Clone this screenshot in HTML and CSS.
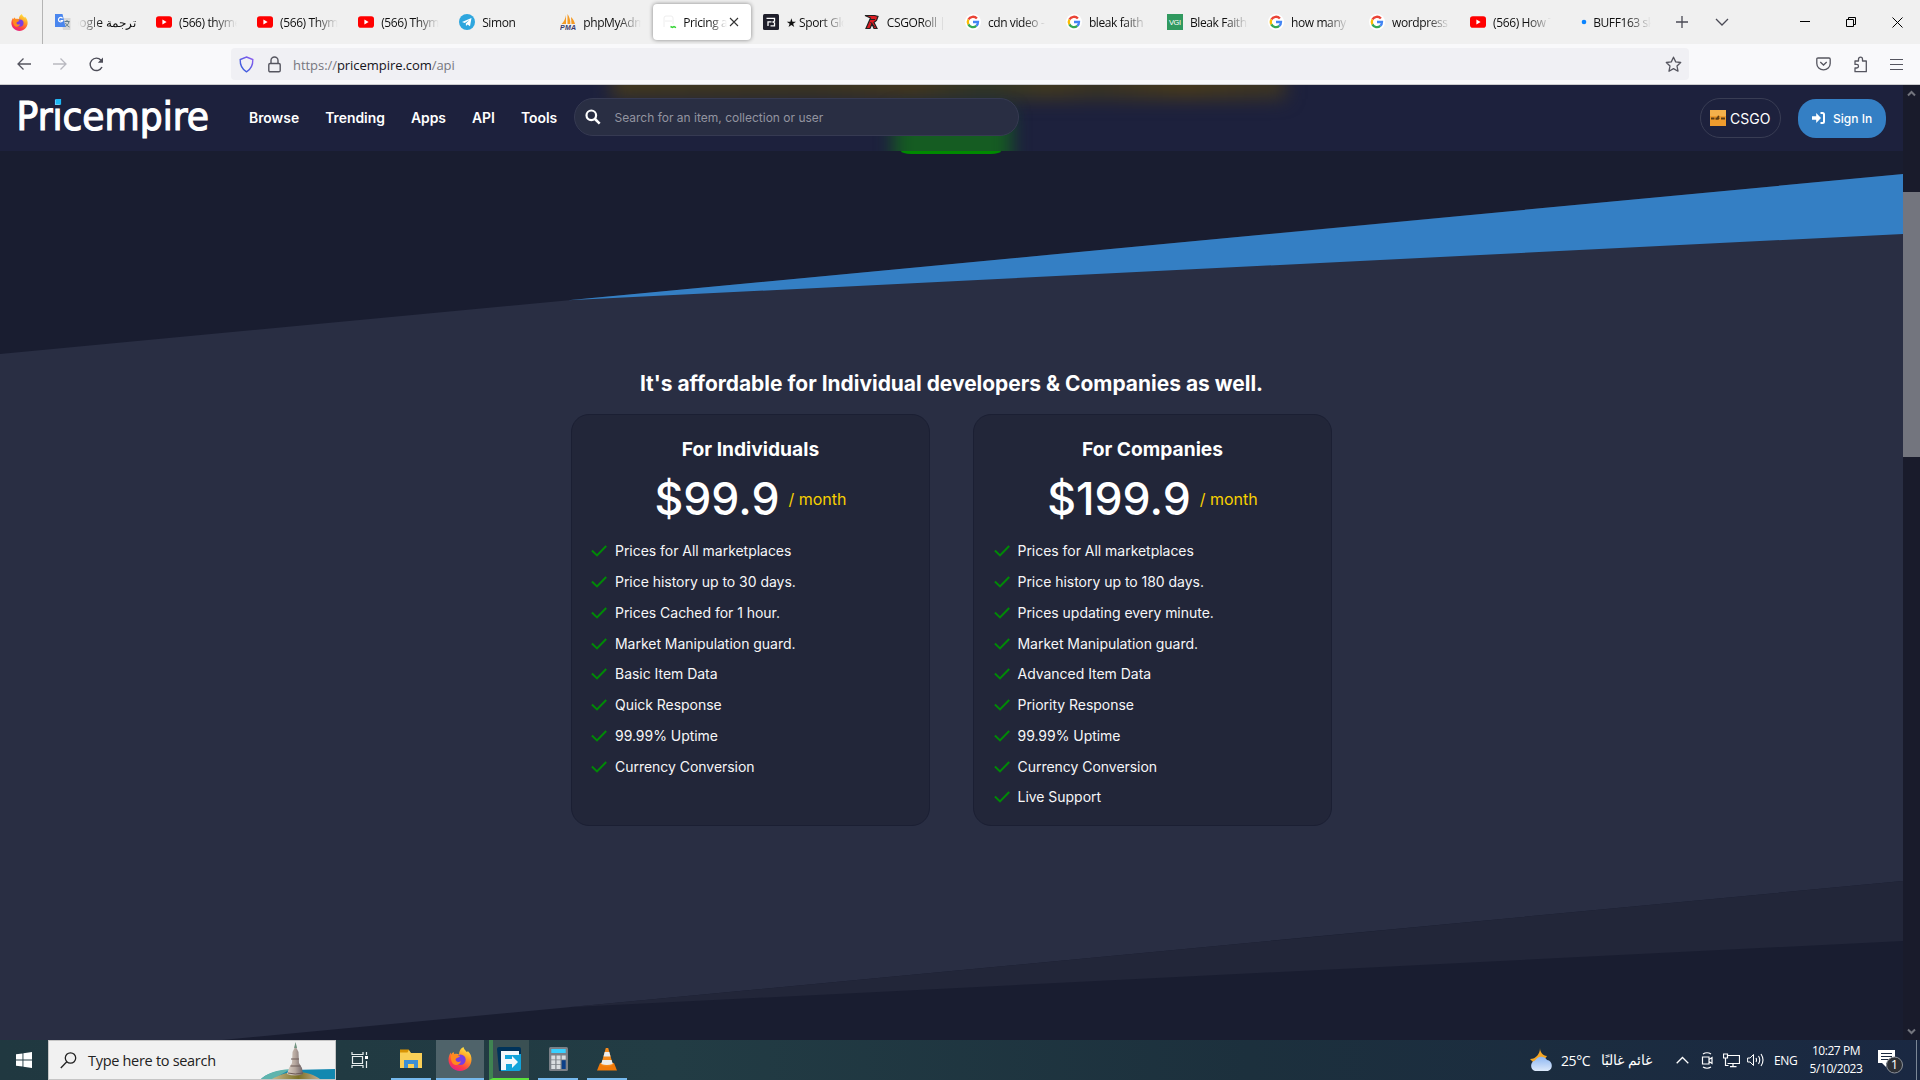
FILE: index.html
```html
<!DOCTYPE html>
<html lang="en">
<head>
<meta charset="utf-8">
<title>Pricing and API</title>
<link rel="stylesheet" href="styles.css">
</head>
<body>
<svg class="defs" width="0" height="0">
  <defs>
    <linearGradient id="fx" x1="0.8" y1="0" x2="0.3" y2="1"><stop offset="0" stop-color="#fff04a"/><stop offset=".4" stop-color="#ff9a24"/><stop offset=".75" stop-color="#ff4044"/><stop offset="1" stop-color="#e0208c"/></linearGradient>
    <linearGradient id="shield" x1="0" y1="1" x2="1" y2="0"><stop offset="0" stop-color="#2b5fd9"/><stop offset="1" stop-color="#8f5bf0"/></linearGradient>
    <linearGradient id="cloud" x1="0" y1="0" x2="0" y2="1"><stop offset="0" stop-color="#8db6f2"/><stop offset="1" stop-color="#dce9fb"/></linearGradient>
    <linearGradient id="stone" x1="0" y1="0" x2="1" y2="0"><stop offset="0" stop-color="#ddd2c8"/><stop offset=".5" stop-color="#b7a89f"/><stop offset="1" stop-color="#6f6468"/></linearGradient>
    <linearGradient id="hill" x1="0" y1="0" x2="1" y2="0"><stop offset="0" stop-color="#c9b98e"/><stop offset=".55" stop-color="#7c7127"/><stop offset="1" stop-color="#c6ad91"/></linearGradient>
    <symbol id="i-firefox" viewBox="0 0 24 24"><path d="M15.5 0c.2 2 1.7 3.2 3 4.700 1 .6 1.200-.2 1.300-.7 2.800 2.500 3.700 5.500 3.700 8.500C23.500 19 18.400 24 12 24S.5 19 .5 12.800c0-3 1-5.500 2.200-7.300l.4 2C4 6 4.700 5.500 5.500 5l.9 2.200c1.600-.6 3-.4 4.600.2 0-3 1.500-6 4.500-7.400z" fill="url(#fx)"/><circle cx="12.500" cy="12.800" r="5.200" fill="#7a3ee0"/><path d="M3 8c3-2 6 0 9 1-1 2-4 1.500-4.500 3.500.3 2.500 3 3.200 5.500 1.700-1 4-6 5-8.500 2C3 14 2.500 11 3 8z" fill="#ff8a1e"/></symbol>
    <symbol id="i-youtube" viewBox="0 0 16 16"><rect y="2.300" width="16" height="11.400" rx="2.800" fill="#f00"/><path d="M6.400 5.600 10.600 8l-4.200 2.400z" fill="#fff"/></symbol>
    <symbol id="i-google" viewBox="0 0 16 16"><circle cx="8" cy="8" r="8" fill="#fff"/><g fill="none" stroke-width="2.300"><path d="M3.400 5.600A5.100 5.100 0 0 1 11.900 4.600" stroke="#ea4335"/><path d="M3.400 5.600a5.100 5.100 0 0 0 0 4.800" stroke="#fbbc05"/><path d="M3.400 10.400a5.100 5.100 0 0 0 7.900 1.500" stroke="#34a853"/><path d="M11.300 11.900A5.100 5.100 0 0 0 13 8H8" stroke="#4285f4"/></g></symbol>
    <symbol id="i-check" viewBox="0 0 16 12"><path d="M.9 5.600 6 10.400 15.200 1" fill="none" stroke="#008a06" stroke-width="2"/></symbol>
  </defs>
</svg>

<header class="browser">
  <div class="tabbar">
    <div class="pinned"><svg width="17" height="17"><use href="#i-firefox"/></svg></div>
    <div class="tabs">
      <div class="tab"><svg width="16" height="16" viewBox="0 0 16 16"><path d="M6 4h9.500v12H8z" fill="#d8d8d8"/><path d="M9.500 7.500h5M12 6v1.500M14 7.500c-.5 3-2.500 4.500-4 5M10.500 9c1 2 2 3 4 4" fill="none" stroke="#607d8b"/><path d="M0 0h7.500l3 13H0z" fill="#4a86ee"/><path d="M7.500 4.400A2.200 2.200 0 1 0 7.700 6.500H5.500" fill="none" stroke="#fff" stroke-width="1.200"/></svg><span class="label rtl">ترجمة Google</span></div>
      <div class="tab"><svg width="16" height="16"><use href="#i-youtube"/></svg><span class="label">(566) thymeleaf</span></div>
      <div class="tab"><svg width="16" height="16"><use href="#i-youtube"/></svg><span class="label">(566) Thymeleaf</span></div>
      <div class="tab"><svg width="16" height="16"><use href="#i-youtube"/></svg><span class="label">(566) Thymeleaf</span></div>
      <div class="tab"><svg width="16" height="16" viewBox="0 0 16 16"><circle cx="8" cy="8" r="8" fill="#2ea6de"/><path d="M3 8 12.500 4 11 12.300 8.500 10.400 7 12l-.2-2.600L10.500 6 5.700 9z" fill="#fff"/></svg><span class="label">Simon</span></div>
      <div class="tab"><svg width="16" height="16" viewBox="0 0 16 16"><path d="M6 1v9H1.500C4 8 5.500 4 6 1zM7.500 0c2 3 3 6 2.800 10H7.500zM11 3c2 2 3.500 4.500 4 7h-3.500z" fill="#f59a23"/><text x="0" y="15.500" class="pma" textLength="16">PMA</text></svg><span class="label">phpMyAdmin</span></div>
      <div class="tab active"><svg width="16" height="16" viewBox="0 0 16 16"><path d="M2 13V4q0-2 2-2h5q2 0 2 2v6M3 7h7" fill="none" stroke="#eee"/><path d="M8.500 12.500l2 1 1.500-.8 2 1" fill="none" stroke="#35d435" stroke-width="1.500"/></svg><span class="label">Pricing and</span><svg class="x" width="10" height="10" viewBox="0 0 10 10"><path d="M1 1l8 8M9 1 1 9" stroke="#333" stroke-width="1.100"/></svg></div>
      <div class="tab"><svg width="16" height="16" viewBox="0 0 16 16"><rect width="16" height="16" rx="1.500" fill="#1f1f2b"/><path d="M3.500 4.300H11.500V7.200L10 8l1.500.8v3H7.500M5 12V7.800H8.500" fill="none" stroke="#fff" stroke-width="1.300"/></svg><span class="label">★ Sport Gloves</span></div>
      <div class="tab"><svg width="16" height="16" viewBox="0 0 16 16"><path d="M1 1.500h9.500l3.500 1-1.500 4-2.500 2 3 6H10L8 10l-2 4.500H2L6.500 4z" fill="#dd1c23" stroke="#222" stroke-width="1.200"/><path d="M6 5.500h5M6.500 8l4 5" stroke="#222"/></svg><span class="label">CSGORoll | Home</span></div>
      <div class="tab"><svg width="16" height="16"><use href="#i-google"/></svg><span class="label">cdn video - Google</span></div>
      <div class="tab"><svg width="16" height="16"><use href="#i-google"/></svg><span class="label">bleak faith - G</span></div>
      <div class="tab"><svg width="16" height="16" viewBox="0 0 16 16"><rect width="16" height="16" fill="#30995f"/><text x="2" y="11" class="vgi" textLength="12">VGI</text></svg><span class="label">Bleak Faith: F</span></div>
      <div class="tab"><svg width="16" height="16"><use href="#i-google"/></svg><span class="label">how many</span></div>
      <div class="tab"><svg width="16" height="16"><use href="#i-google"/></svg><span class="label">wordpress - G</span></div>
      <div class="tab"><svg width="16" height="16"><use href="#i-youtube"/></svg><span class="label">(566) How To</span></div>
      <div class="tab"><svg width="16" height="16" viewBox="0 0 16 16"><circle cx="13" cy="8" r="2.300" fill="#0a84ff"/></svg><span class="label near">BUFF163 skins</span></div>
    </div>
    <div class="tabtools">
      <svg width="14" height="14" viewBox="0 0 14 14"><path d="M7 1v12M1 7h12" stroke="#4a4a55" stroke-width="1.300"/></svg>
      <svg width="14" height="8" viewBox="0 0 14 8"><path d="M1 1l6 6 6-6" fill="none" stroke="#4a4a55" stroke-width="1.300"/></svg>
    </div>
    <div class="winctl">
      <svg width="10" height="10"><path d="M0 4.500h10" stroke="#000"/></svg>
      <svg width="10" height="10"><path d="M.5 2.500h7v7h-7zM2.500 2.500v-2h7v7h-2" fill="none" stroke="#000"/></svg>
      <svg width="11" height="11"><path d="M.5.500l10 10M10.500.500l-10 10" stroke="#000"/></svg>
    </div>
  </div>
  <div class="toolbar">
    <div class="navbtns">
      <svg width="14" height="14" viewBox="0 0 14 14"><path d="M14 7H1M6.500 1.500 1 7l5.500 5.500" fill="none" stroke="#55555f" stroke-width="1.300"/></svg>
      <svg width="14" height="14" viewBox="0 0 14 14"><path d="M0 7h13M7.500 1.500 13 7l-5.500 5.500" fill="none" stroke="#b9b9c0" stroke-width="1.300"/></svg>
      <svg width="15" height="15" viewBox="0 0 15 15"><path d="M13 10A6.200 6.200 0 1 1 12 3.200" fill="none" stroke="#4d4d58" stroke-width="1.400"/><path d="M14 .6v5.200H8.800z" fill="#4d4d58"/></svg>
    </div>
    <div class="urlbar">
      <svg width="15" height="17" viewBox="0 0 15 17"><path d="M7.500 1 13.800 3.500c.2 5.500-1.500 9.500-6.300 12.300C2.700 13 1 9 1.200 3.500z" fill="none" stroke="url(#shield)" stroke-width="1.400"/></svg>
      <svg width="13" height="17" viewBox="0 0 13 17"><rect x=".8" y="7.500" width="11.400" height="8.300" rx="1.300" fill="none" stroke="#55555f" stroke-width="1.400"/><path d="M3 7.500V4.500a3.500 3.500 0 0 1 7 0v3" fill="none" stroke="#55555f" stroke-width="1.400"/></svg>
      <span class="url">https://<b>pricempire.com</b>/api</span>
      <svg class="star" width="17" height="17" viewBox="0 0 17 17"><path d="M8.500 1.200l2.200 4.700 5 .6-3.700 3.500 1 5.200-4.500-2.600L4 15.200 5 10 1.300 6.500l5-.6z" fill="none" stroke="#55555f" stroke-width="1.300" stroke-linejoin="round"/></svg>
    </div>
    <div class="exts">
      <svg width="15" height="14" viewBox="0 0 15 14"><path d="M2 1h11q1.200 0 1.200 1.200V6.500a6.700 6.300 0 0 1-13.400 0V2.200Q.8 1 2 1zM4.300 5 7.500 8l3.200-3" fill="none" stroke="#55555f" stroke-width="1.300"/></svg>
      <svg width="15" height="17" viewBox="0 0 15 17"><path d="M5.500 5V3.200a2 2 0 0 1 4 0V5H13.300V15.700H2V12h1.700a1.800 1.800 0 0 0 0-3.600H2V5z" fill="none" stroke="#55555f" stroke-width="1.300" stroke-linejoin="round"/></svg>
      <svg width="13" height="11" viewBox="0 0 13 11"><path d="M0 .5h13M0 5.500h13M0 10.500h13" stroke="#55555f"/></svg>
    </div>
  </div>
</header>

<div class="viewport">
  <main class="page">
    <svg class="backdrop" width="1903" height="955" viewBox="0 85 1903 955">
      <path d="M0 354 1903 174V881L0 1061z" fill="#292e43"/>
      <path d="M568 300.300 1903 174v60z" fill="#347fc4"/>
      <path d="M568 1007.300 1903 881v60z" fill="#222639"/>
    </svg>
    <nav class="sitebar">
      <div class="glow gold"></div><div class="glow green"></div>
      <svg class="logo" width="200" height="48" viewBox="0 0 200 48" role="img"><text x="-1.500" y="35.500" textLength="192.500" lengthAdjust="spacingAndGlyphs">Pricempire</text><path d="M37.700 5h5.400v5.700h-5.400z" fill="#1cb8f5"/></svg>
      <div class="links"><a>Browse</a><a>Trending</a><a>Apps</a><a>API</a><a>Tools</a></div>
      <div class="search"><svg width="16" height="16" viewBox="0 0 16 16"><circle cx="6.300" cy="6.300" r="4.800" fill="none" stroke="#fff" stroke-width="2.200"/><path d="M10 10l4.700 4.700" stroke="#fff" stroke-width="2.500"/></svg><span>Search for an item, collection or user</span></div>
      <div class="game"><svg width="16" height="16" viewBox="0 0 16 16"><rect width="16" height="16" fill="#ee9b2d"/><rect width="16" height="6" fill="#f4b14b"/><path d="M1 7.500h3.500v2H1zM5.500 7.500H7l1-2 1.500.5-.8 1.800H10l-1.500 2h-3zM11 7.500h4v2h-4z" fill="#5b3c14"/></svg><span>CSGO</span></div>
      <div class="signin"><svg width="13" height="12" viewBox="0 0 13 12"><path d="M0 4.300h4.200V1L9 6l-4.800 5V7.700H0z" fill="#fff"/><path d="M8.500 1h2Q12 1 12 2.500v7q0 1.500-1.500 1.500h-2" fill="none" stroke="#fff" stroke-width="2"/></svg><span>Sign In</span></div>
    </nav>
    <div class="undertab"></div>
    <section class="pricing">
      <h2>It's affordable for Individual developers &amp; Companies as well.</h2>
      <div class="plans">
        <article class="plan">
          <h3>For Individuals</h3>
          <div class="price"><span class="amount">$99.9</span><span class="per">/ month</span></div>
          <ul>
            <li><svg width="16" height="12"><use href="#i-check"/></svg><span>Prices for All marketplaces</span></li>
            <li><svg width="16" height="12"><use href="#i-check"/></svg><span>Price history up to 30 days.</span></li>
            <li><svg width="16" height="12"><use href="#i-check"/></svg><span>Prices Cached for 1 hour.</span></li>
            <li><svg width="16" height="12"><use href="#i-check"/></svg><span>Market Manipulation guard.</span></li>
            <li><svg width="16" height="12"><use href="#i-check"/></svg><span>Basic Item Data</span></li>
            <li><svg width="16" height="12"><use href="#i-check"/></svg><span>Quick Response</span></li>
            <li><svg width="16" height="12"><use href="#i-check"/></svg><span>99.99% Uptime</span></li>
            <li><svg width="16" height="12"><use href="#i-check"/></svg><span>Currency Conversion</span></li>
          </ul>
        </article>
        <article class="plan">
          <h3>For Companies</h3>
          <div class="price"><span class="amount">$199.9</span><span class="per">/ month</span></div>
          <ul>
            <li><svg width="16" height="12"><use href="#i-check"/></svg><span>Prices for All marketplaces</span></li>
            <li><svg width="16" height="12"><use href="#i-check"/></svg><span>Price history up to 180 days.</span></li>
            <li><svg width="16" height="12"><use href="#i-check"/></svg><span>Prices updating every minute.</span></li>
            <li><svg width="16" height="12"><use href="#i-check"/></svg><span>Market Manipulation guard.</span></li>
            <li><svg width="16" height="12"><use href="#i-check"/></svg><span>Advanced Item Data</span></li>
            <li><svg width="16" height="12"><use href="#i-check"/></svg><span>Priority Response</span></li>
            <li><svg width="16" height="12"><use href="#i-check"/></svg><span>99.99% Uptime</span></li>
            <li><svg width="16" height="12"><use href="#i-check"/></svg><span>Currency Conversion</span></li>
            <li><svg width="16" height="12"><use href="#i-check"/></svg><span>Live Support</span></li>
          </ul>
        </article>
      </div>
    </section>
  </main>
  <div class="scrollbar">
    <svg width="17" height="17" viewBox="0 0 17 17"><path d="M5 10.500 8.500 7l3.500 3.500" fill="none" stroke="#73757e" stroke-width="2"/></svg>
    <div class="thumb"></div>
    <svg width="17" height="17" viewBox="0 0 17 17"><path d="M5 6.500 8.500 10 12 6.500" fill="none" stroke="#73757e" stroke-width="2"/></svg>
  </div>
</div>

<footer class="taskbar">
  <div class="start"><svg width="16" height="16" viewBox="0 0 16 16"><path d="M0 2.300 6.500 1.400V7.500H0zM7.400 1.300 16 0v7.500H7.400zM0 8.400h6.500v6.200L0 13.700zM7.400 8.400H16V16l-8.600-1.200z" fill="#fff"/></svg></div>
  <div class="find"><svg width="17" height="17" viewBox="0 0 17 17"><circle cx="10.500" cy="6" r="5.200" fill="none" stroke="#222" stroke-width="1.300"/><path d="M6.800 9.800.8 16" stroke="#222" stroke-width="1.300"/></svg><span>Type here to search</span>
    <svg class="scene" width="74" height="38" viewBox="0 0 74 38"><path d="M0 38c5-5 16-9 30-9l44-1v10z" fill="#1388b0"/><path d="M0 38c5-5 14-9 30-10L12 38z" fill="#5fb4ad"/><path d="M11 38c6-3 12-7 24-7 12 0 18 3 24 7z" fill="url(#hill)"/><path d="M34.500 2l1 5 2 4 .5 11 3 5 1 6q-8 3-16 0l2-6 3-5 .5-11 2-4z" fill="url(#stone)"/><path d="M34.500 1l1.600 6h-3z" fill="#719481"/><path d="M30 18h8M29.500 25h10M27 32q7 2 15 0" fill="none" stroke="#6d5a56"/></svg>
  </div>
  <div class="view"><svg width="17" height="16" viewBox="0 0 17 16"><path d="M1 0v2.500h11V0M1 16v-2.500h11V16M1.500 4.500h10v7h-10zM15.500 0v3M15.500 9v7" fill="none" stroke="#e8eeee" stroke-width="1.200"/><path d="M14 4h3v3h-3z" fill="#fff"/></svg></div>
  <div class="apps">
    <div class="app"><svg width="24" height="22" viewBox="0 0 24 22"><path d="M1 2h9l2 3h11v15H1z" fill="#f9cf57"/><path d="M1 1.500h9l-1.500 3H1z" fill="#d99405"/><path d="M5 20v-8h14v8h-4v-4H9v4z" fill="#3c8fd6"/></svg></div>
    <div class="app on"><svg width="24" height="24"><use href="#i-firefox"/></svg></div>
    <div class="app file"><svg width="24" height="24" viewBox="0 0 24 24"><path d="M0 2q0-2 2-2h20q2 0 2 2v20q0 2-2 2H2z" fill="#00335a"/><path d="M4 7h20v15q0 2-2 2H4z" fill="#12a4da"/><path d="M4 23V4h18v4H8v4h7V9l6 6-6 6v-4H9v6z" fill="#f3f8fb"/></svg></div>
    <div class="app"><svg width="19" height="24" viewBox="0 0 19 24"><rect width="19" height="24" rx="1.500" fill="#7b8087"/><path d="M2.300 2h14.400v4H2.300z" fill="#38d0ff"/><path d="M2.300 8.500h4v4h-4zM7.500 8.500h4v4h-4zM12.700 8.500h4v4h-4zM2.300 13.200h4v4h-4zM7.500 13.200h4v4h-4zM2.300 18h4v4h-4zM7.500 18h4v4h-4z" fill="#d9dde0"/><path d="M12.700 13.200h4V22h-4z" fill="#0c3f88"/></svg></div>
    <div class="app"><svg width="20" height="24" viewBox="0 0 20 24"><path d="M3 16h14l3 7.500H0z" fill="#f07a0a"/><path d="M8.800 1h2.400L16 18q-6 3-12 0z" fill="#f58a1b"/><path d="M7.700 5h4.600l1.200 4.500h-7zM5.400 13h9.200l1.200 4q-6 2-11.600 0z" fill="#ececec"/></svg></div>
  </div>
  <div class="tray">
    <svg class="weather" width="25" height="24" viewBox="0 0 25 24"><path d="M11 0c0 4 3 8 7 8-3 5-9 7-14 6l-3-3c6 0 10-5 10-11z" fill="#f5a623"/><path d="M6 23a5.500 5.500 0 0 1 0-10.500A7 7 0 0 1 18 12a5.700 5.700 0 0 1 1 11z" fill="url(#cloud)"/></svg>
    <span class="temp">25°C</span><span class="sky" dir="rtl">غائم غالبًا</span>
    <svg class="up" width="13" height="8" viewBox="0 0 13 8"><path d="M.7 7.300 6.500 1.500l5.800 5.800" fill="none" stroke="#fff" stroke-width="1.300"/></svg>
    <svg class="cam" width="12" height="17" viewBox="0 0 12 17"><path d="M2 2q4-2.500 8 0M2 15q4 2.500 8 0M1.500 5h6.500v7H1.500zM8 7.500l3-2v6l-3-2" fill="none" stroke="#fff" stroke-width="1.200"/></svg>
    <svg class="net" width="17" height="15" viewBox="0 0 17 15"><path d="M5 2.500h11.500v8H4.500M.5 1h4v4h-4zM2.500 5v7.500h3M10 10.500v3M7 13.700h6.500" fill="none" stroke="#fff" stroke-width="1.200"/></svg>
    <svg class="vol" width="17" height="14" viewBox="0 0 17 14"><path d="M.6 5h2.500L6.500 1.500v11L3.100 9H.6z" fill="none" stroke="#fff"/><path d="M9 5q1 2 0 4M11.500 3q2.500 4 0 8M14 1q4 6 0 12" fill="none" stroke="#fff" stroke-width="1.100"/></svg>
    <span class="lang">ENG</span>
    <div class="clock"><span>10:27 PM</span><span>5/10/2023</span></div>
    <div class="notes"><svg width="26" height="26" viewBox="0 0 26 26"><path d="M0 1h17v13H8v4l-4-4H0z" fill="#fff"/><path d="M3 4.500h11M3 7.500h11M3 10.500h7" stroke="#1b2a40" stroke-width="1.200"/><circle cx="16.500" cy="16" r="8" fill="#2c2f35" stroke="#8b9098"/><text x="16.500" y="20" class="badge">1</text></svg></div>
    <div class="peek"></div>
  </div>
</footer>
</body>
</html>
```

FILE: styles.css
```css
* { box-sizing: border-box; }
body { margin: 0; width: 1920px; height: 1080px; overflow: hidden; display: flex; flex-direction: column; font-family: Inter, "Noto Sans", sans-serif; background: #191d30; }
svg { display: block; flex: none; }
.defs { position: absolute; }
.browser { flex: none; height: 85px; border-bottom: 1px solid #ccccce; background: #f9f9fb; color: #111; font-family: "Open Sans", "Noto Sans", sans-serif; }
.tabbar { height: 44px; background: #f0f0f0; display: flex; align-items: center; }
.pinned { width: 43px; height: 44px; display: flex; align-items: center; padding-left: 11px; border-right: 1px solid #b4b4b4; }
.tabs { display: flex; width: 1618px; padding-left: 2px; }
.tab { width: 101.050px; flex: none; height: 36px; padding-left: 10px; display: flex; align-items: center; gap: 7px; }
.label { width: 58px; padding-top: 1px; font-size: 12px; letter-spacing: -0.4px; line-height: 20px; overflow: hidden; white-space: nowrap; -webkit-mask-image: linear-gradient(90deg, #000 60%, transparent); mask-image: linear-gradient(90deg, #000 60%, transparent); }
.label.rtl { direction: rtl; letter-spacing: 0; -webkit-mask-image: linear-gradient(270deg, #000 60%, transparent); mask-image: linear-gradient(270deg, #000 60%, transparent); }
.label.near { margin-left: -1px; }
.tab.active { width: 97.500px; margin: 0 2px; padding-left: 9px; gap: 5px; background: #fff; border-radius: 4px; box-shadow: 0 0 4px rgba(0,0,0,.45); }
.tab.active .label { width: 44px; }
.x { margin-left: -3px; }
.tabtools { display: flex; align-items: center; gap: 26px; padding-left: 14px; }
.winctl { margin-left: auto; display: flex; align-items: center; gap: 36px; padding-right: 17px; }
.toolbar { height: 40px; display: flex; align-items: center; }
.navbtns { width: 231px; display: flex; gap: 22px; padding-left: 17px; align-items: center; }
.urlbar { width: 1458px; height: 32px; border-radius: 4px; background: #f0f0f4; display: flex; align-items: center; padding: 0 7px 0 8px; }
.urlbar svg + svg { margin-left: 14px; }
.url { margin-left: 12px; padding-top: 2px; font-size: 13px; color: #77777f; letter-spacing: -.05px; }
.url b { font-weight: 400; color: #15141a; }
.urlbar .star { margin-left: auto; }
.exts { margin-left: auto; display: flex; align-items: center; gap: 22px; padding-right: 17px; }

.viewport { height: 955px; flex: none; display: flex; }
.page { position: relative; width: 1903px; height: 955px; overflow: hidden; background: #191d30; color: #fff; }
.backdrop { position: absolute; inset: 0; }
.sitebar { position: relative; height: 66px; background: #1d213d; display: flex; align-items: center; overflow: hidden; padding-right: 17px; }
.sitebar > * { position: relative; flex: none; }
.sitebar > .glow { position: absolute; }
.gold { left: 612px; top: -18px; width: 674px; height: 32px; background: linear-gradient(90deg, #43391e, #3c3520 30%, #45391d 45%, #323826 55%, #43391e 65%, #3a3423 72%, #483a1b 85%, #3b3424); filter: blur(9px); }
.green { left: 894px; top: 26px; width: 117px; height: 64px; background: #155c22; filter: blur(9px); }
.logo { margin-left: 18px; }
.logo text { font: 38.500px "DejaVu Sans", sans-serif; fill: #fff; stroke: #fff; stroke-width: 1.200px; }
.links { display: flex; width: 325px; gap: 26px; margin-left: 31px; padding-bottom: 1px; font-size: 13.900px; font-weight: 600; }
.search { top: -1px; width: 445px; height: 38px; border: 1px solid #363a52; border-radius: 19px; background: #292e43; display: flex; align-items: center; gap: 14px; padding-left: 9.500px; font-size: 12px; color: #9394a0; }
.game { margin-left: auto; width: 81px; height: 40px; border: 1px solid #393d54; border-radius: 20px; display: flex; align-items: center; gap: 4px; padding-left: 9px; font-size: 14px; }
.signin { margin-left: 17px; width: 88px; height: 39px; border-radius: 18px; background: #347fc4; display: flex; align-items: center; gap: 8px; padding-left: 14px; font-size: 12px; font-weight: 500; }
.undertab { position: absolute; left: 901px; top: 66px; width: 100px; height: 3px; background: #008a00; border-radius: 0 0 10px 10px / 0 0 3px 3px; }
.pricing { position: relative; padding-top: 218px; display: flex; flex-direction: column; align-items: center; }
h2 { margin: 0; height: 45px; line-height: 30px; font-size: 20.950px; font-weight: 700; white-space: nowrap; }
.plans { display: flex; gap: 43px; }
.plan { width: 359px; height: 412px; border: 1px solid #1b1f33; border-radius: 18px; background: #222639; padding: 21px 19px; }
h3 { margin: 0; text-align: center; font-size: 19.200px; line-height: 26px; font-weight: 700; }
.price { display: flex; justify-content: center; align-items: center; gap: 9px; height: 74px; }
.amount { font-size: 44.600px; font-weight: 500; }
.per { font-size: 16px; color: #f8d000; }
ul { list-style: none; margin: 0; padding: 0; }
li { height: 30.750px; display: flex; align-items: center; gap: 8px; font-size: 14px; letter-spacing: -.03px; color: #f6f6f8; }
li span { position: relative; top: -.5px; }
.plan + .plan ul { padding-left: .5px; }
.scrollbar { width: 17px; background: #191b2b; display: flex; flex-direction: column; justify-content: space-between; }
.thumb { height: 265px; margin: 90px 0 auto; background: #73757e; }

.taskbar { height: 40px; flex: none; display: flex; background: linear-gradient(90deg, #203840 0, #223c44 35%, #1c303d 65%, #1a2842 100%); color: #fff; font-family: "Open Sans", "Noto Sans", sans-serif; }
.start { width: 48px; display: flex; align-items: center; padding-left: 16px; }
.find { width: 288px; background: #f1f1f1; border: 1px solid #c5c5c5; display: flex; align-items: center; gap: 11px; padding-left: 11px; color: #222; font-size: 14.500px; letter-spacing: -.3px; }
.scene { margin-left: auto; }
.view { width: 55px; display: flex; align-items: center; padding-left: 15px; }
.apps { display: flex; }
.app { width: 40px; margin-right: 9px; display: flex; align-items: center; justify-content: center; border-bottom: 2px solid #76b9ed; }
.app:first-child { margin-right: 5px; }
.app.on { width: 48px; margin-right: 5px; background: #4f636a; }
.app.file { background: #3a5053; border-left: 4px solid #3f8352; border-bottom-color: #5be33b; padding-right: 4px; }
.tray { margin-left: auto; width: 391px; display: flex; align-items: center; font-size: 12px; white-space: nowrap; }
.temp { margin-left: 7px; width: 31px; font-size: 14px; letter-spacing: -.4px; }
.sky { margin-left: 6px; width: 54px; font-size: 13.500px; }
.up { margin-left: 24px; }
.cam { margin-left: 12px; }
.net { margin-left: 10px; }
.vol { margin-left: 7px; }
.lang { margin-left: 10px; width: 24px; letter-spacing: -.4px; }
.clock { margin-left: 8px; width: 60px; display: flex; flex-direction: column; align-items: center; line-height: 18px; font-size: 12px; letter-spacing: -.45px; }
.notes { margin-left: 12px; padding-top: 4px; }
.peek { margin-left: auto; margin-right: 3px; width: 1px; height: 40px; background: #7b8796; }
.pma { font: italic bold 7px "Liberation Sans", sans-serif; fill: #3a3a6c; }
.vgi { font: 7.500px "Liberation Sans", sans-serif; fill: #fff; }
.badge { font: 13px "Open Sans", sans-serif; fill: #fff; text-anchor: middle; }
```
